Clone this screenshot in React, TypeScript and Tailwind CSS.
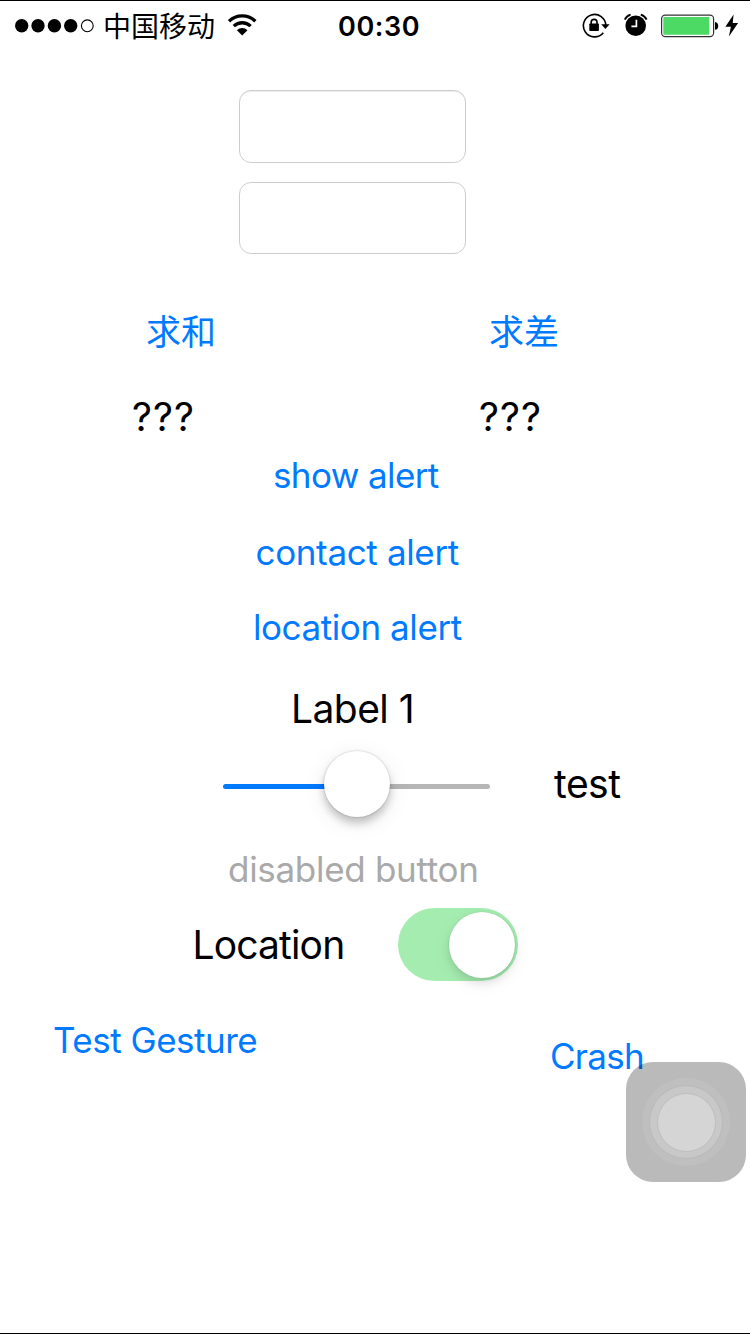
import React from 'react';

function LinkButton({ children, className }: { children: React.ReactNode; className: string }) {
  return (
    <button className={`block h-11 whitespace-nowrap text-left leading-[44px] text-[#007aff] ${className}`}>{children}</button>
  );
}

function Label({ children, className }: { children: React.ReactNode; className: string }) {
  return <span className={`block h-12 whitespace-nowrap leading-[48px] ${className}`}>{children}</span>;
}

function StatusBar() {
  return (
    <header className="flex h-[49px] items-center">
      <svg className="ml-[14px] h-[16px] w-[82px]" viewBox="0 0 82 16">
        <circle cx="7.7" cy="7.8" r="6.7" />
        <circle cx="24" cy="7.8" r="6.7" />
        <circle cx="40.4" cy="7.8" r="6.7" />
        <circle cx="56.7" cy="7.8" r="6.7" />
        <circle cx="73.3" cy="7.8" r="5.9" fill="#fff" stroke="#000" strokeWidth="1.1" />
      </svg>
      <span className="ml-[7px] w-[112px] pt-[2px] whitespace-nowrap text-[28px] leading-[48px]">中国移动</span>
      <svg className="ml-3 h-[24px] w-[30px]" viewBox="227 13.5 30 24" fill="none" stroke="#000" strokeWidth="3.3">
        <path d="M229 20.8a19 19 0 0 1 26.4 0" />
        <path d="M233.8 25.6a12.2 12.2 0 0 1 16.8 0" />
        <path d="M242.2 35l-5.3-5.3a7.6 7.6 0 0 1 10.6 0z" fill="#000" stroke="none" />
      </svg>
      <span className="ml-[81px] w-[90px] pt-[2px] whitespace-nowrap text-[27px] leading-[48px] font-semibold tracking-[0.6px]">00:30</span>
      <svg className="ml-[153px] h-[26px] w-[30px]" viewBox="581 12.5 30 26">
        <path d="M603.3 32.2a11.2 11.2 0 1 1 2.5-7.2" fill="none" stroke="#000" strokeWidth="1.6" />
        <path d="M601.2 23.7h8.4l-4.2 4.8z" />
        <rect x="589.3" y="23" width="9.6" height="7.6" rx="0.8" />
        <path d="M591.2 23.5v-1.7a2.9 2.9 0 0 1 5.8 0v1.7" fill="none" stroke="#000" strokeWidth="1.6" />
      </svg>
      <svg className="ml-[12px] h-[26px] w-[26px]" viewBox="623 12.5 26 26">
        <circle cx="635.7" cy="25.3" r="10.3" />
        <path d="M624.8 19.2q1.8-3.8 5.8-5M646.6 19.2q-1.8-3.8-5.8-5" fill="none" stroke="#000" strokeWidth="1.9" />
        <path d="M636.4 19.3v6.6h-5" fill="none" stroke="#fff" strokeWidth="1.7" />
      </svg>
      <svg className="ml-[11px] h-[26px] w-[80px]" viewBox="660 12.5 80 26">
        <rect x="661.6" y="14.6" width="52" height="21.6" rx="3.6" fill="#fff" stroke="#333" strokeWidth="1.2" />
        <rect x="663.3" y="16.5" width="46" height="17.8" rx="1" fill="#4cd964" />
        <path d="M715 21.5q3.2.5 3.2 3.9t-3.2 3.9z" />
        <path d="M733.6 14l-8.2 12.2h5.5L728.9 36l9.2-13.4h-5.4z" />
      </svg>
    </header>
  );
}

export default function App() {
  return (
    <div className="relative flex h-[1334px] w-[750px] flex-col overflow-hidden border-y border-black bg-white font-['Inter','Noto_Sans_CJK_SC',sans-serif] text-black">
      <StatusBar />
      <main className="flex flex-col">
        <input aria-label="First number" className="mt-10 ml-[239px] h-[73px] w-[227px] rounded-[12px] border border-[#cdcdcd] bg-white px-3 shadow-[inset_0_1px_0_#eeeeee]" />
        <input aria-label="Second number" className="mt-[19px] ml-[239px] h-[72px] w-[227px] rounded-[12px] border border-[#cdcdcd] bg-white px-3" />
        <div className="mt-14 flex">
          <LinkButton className="ml-[146px] w-[343px] text-[35px]">求和</LinkButton>
          <LinkButton className="text-[35px]">求差</LinkButton>
        </div>
        <div className="mt-[39px] flex">
          <Label className="ml-[132px] w-[347px] text-[39px] tracking-[1.1px]">???</Label>
          <Label className="text-[39px] tracking-[1.1px]">???</Label>
        </div>
        <LinkButton className="mt-3 ml-[273px] text-[35px] tracking-[-0.6px]">show alert</LinkButton>
        <LinkButton className="mt-[33px] ml-[255.5px] text-[35px] tracking-[-0.35px]">contact alert</LinkButton>
        <LinkButton className="mt-[31px] ml-[253px] text-[35px] tracking-[-0.42px]">location alert</LinkButton>
        <Label className="mt-9 ml-[291px] text-[39px] tracking-[-0.55px]">Label 1</Label>
        <div className="mt-[17px] flex h-[68px]">
          <div className="ml-[223px] flex h-[68px] w-[267px] items-center">
            <div className="mt-[5px] h-[5px] w-[103px] rounded-l-full bg-[#007aff]" />
            <div className="relative z-10 -mx-[2px] size-[66px] shrink-0 rounded-full bg-white shadow-[0_0_1px_1px_rgba(0,0,0,0.08),0_6px_8px_rgba(0,0,0,0.22),0_5px_26px_rgba(0,0,0,0.08)]" />
            <div className="mt-[5px] h-[5px] flex-1 rounded-r-full bg-[#b6b6b6]" />
          </div>
          <Label className="mt-[10px] ml-[64px] text-[39px] tracking-[-0.5px]">test</Label>
        </div>
        <button disabled className="mt-[29px] ml-[228px] block h-11 whitespace-nowrap text-left text-[35px] leading-[44px] tracking-[-0.3px] text-[#a9a9a9]">disabled button</button>
        <div className="mt-[17px] flex h-[73px]">
          <Label className="mt-[13px] ml-[192.5px] w-[205.5px] text-[39px] tracking-[-0.85px]">Location</Label>
          <div className="flex h-[73px] w-[120px] items-center justify-end rounded-full bg-[#a5ecb1] pr-[3px]">
            <div className="size-[66px] rounded-full bg-white shadow-[0_0_2px_rgba(0,0,0,0.12),0_5px_8px_rgba(0,0,0,0.1),0_6px_20px_rgba(0,0,0,0.05)]" />
          </div>
        </div>
        <div className="mt-[37px] flex items-start">
          <LinkButton className="ml-[53px] w-[497px] text-[35px] tracking-[-0.5px]">Test Gesture</LinkButton>
          <LinkButton className="mt-4 text-[35px] tracking-[-0.7px]">Crash</LinkButton>
        </div>
      </main>
      <div className="absolute top-[1061px] left-[626px] flex size-[120px] items-center justify-center rounded-[27px] bg-black/27">
        <div className="flex size-[88px] items-center justify-center rounded-full bg-[#bfbfbf]">
          <div className="flex size-[74px] items-center justify-center rounded-full border border-[#b9b9b9] bg-[#c8c8c8]">
            <div className="size-[59px] rounded-full border border-[#bebebe] bg-[#d5d5d5]" />
          </div>
        </div>
      </div>
    </div>
  );
}
